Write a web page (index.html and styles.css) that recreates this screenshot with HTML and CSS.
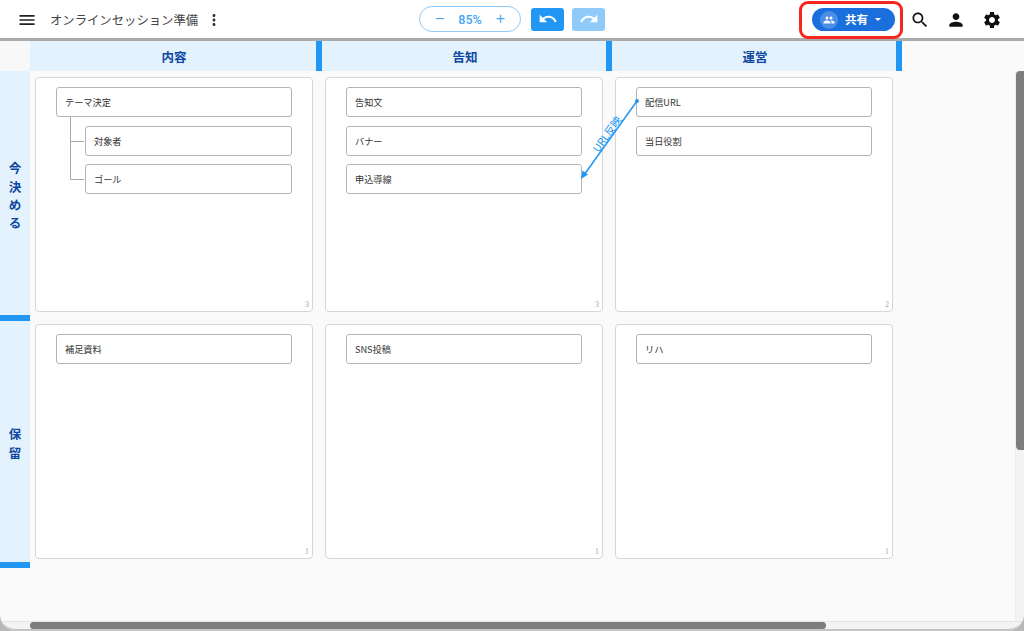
FILE: index.html
```html
<!DOCTYPE html>
<html lang="ja">
<head>
<meta charset="utf-8">
<title>オンラインセッション準備</title>
<link rel="stylesheet" href="styles.css">
</head>
<body>
<header class="toolbar">
  <div class="tb-left">
    <svg class="ic-menu" width="20" height="20" viewBox="0 0 24 24"><path d="M3 18h18v-2H3v2zm0-5h18v-2H3v2zm0-7v2h18V6H3z"/></svg>
    <span class="title">オンラインセッション準備</span>
    <svg class="ic-dots" width="18" height="18" viewBox="0 0 24 24"><path d="M12 8c1.1 0 2-.9 2-2s-.9-2-2-2-2 .9-2 2 .9 2 2 2zm0 2c-1.1 0-2 .9-2 2s.9 2 2 2 2-.9 2-2-.9-2-2-2zm0 6c-1.1 0-2 .9-2 2s.9 2 2 2 2-.9 2-2-.9-2-2-2z"/></svg>
  </div>
  <div class="tb-center">
    <div class="zoom"><span class="zoom-btn">−</span><span class="zoom-val">85%</span><span class="zoom-btn">+</span></div>
    <button class="hist"><svg width="24" height="24" viewBox="0 0 24 24"><path d="M12.5 8c-2.65 0-5.05.99-6.9 2.6L2 7v9h9l-3.62-3.62c1.39-1.16 3.16-1.88 5.12-1.88 3.54 0 6.55 2.31 7.6 5.5l2.37-.78C21.08 11.03 17.15 8 12.5 8z"/></svg></button>
    <button class="hist off"><svg width="24" height="24" viewBox="0 0 24 24"><path d="M18.4 10.6C16.55 8.99 14.15 8 11.5 8c-4.65 0-8.58 3.03-9.96 7.22L3.9 16c1.05-3.19 4.05-5.5 7.6-5.5 1.95 0 3.73.72 5.12 1.88L13 16h9V7l-3.6 3.6z"/></svg></button>
  </div>
  <div class="tb-right">
    <div class="share-ring">
      <div class="share">
        <span class="avatar"><svg width="12" height="12" viewBox="0 0 24 24"><path d="M16 11c1.66 0 2.99-1.34 2.99-3S17.66 5 16 5s-3 1.34-3 3 1.34 3 3 3zm-8 0c1.66 0 2.99-1.34 2.99-3S9.66 5 8 5 5 6.34 5 8s1.34 3 3 3zm0 2c-2.33 0-7 1.17-7 3.5V19h14v-2.5c0-2.33-4.67-3.5-7-3.5zm8 0c-.29 0-.62.02-.97.05 1.16.84 1.97 1.97 1.97 3.45V19h6v-2.5c0-2.33-4.67-3.5-7-3.5z"/></svg></span>
        <span class="share-label">共有</span>
        <span class="caret"></span>
      </div>
    </div>
    <svg class="ic" width="20" height="20" viewBox="0 0 24 24"><path d="M15.5 14h-.79l-.28-.27C15.41 12.59 16 11.11 16 9.5 16 5.91 13.09 3 9.5 3S3 5.91 3 9.5 5.91 16 9.5 16c1.61 0 3.09-.59 4.23-1.57l.27.28v.79l5 4.99L20.49 19l-4.99-5zm-6 0C7.01 14 5 11.99 5 9.5S7.01 5 9.5 5 14 7.01 14 9.5 11.99 14 9.5 14z"/></svg>
    <svg class="ic" width="20" height="20" viewBox="0 0 24 24"><path d="M12 12c2.21 0 4-1.790 4-4s-1.790-4-4-4-4 1.790-4 4 1.790 4 4 4zm0 2c-2.670 0-8 1.340-8 4v2h16v-2c0-2.660-5.330-4-8-4z"/></svg>
    <svg class="ic" width="20" height="20" viewBox="0 0 24 24"><path d="M19.14 12.94c.04-.3.06-.61.06-.94 0-.32-.02-.64-.07-.94l2.03-1.58c.18-.14.23-.41.12-.61l-1.92-3.32c-.12-.22-.37-.29-.59-.22l-2.39.96c-.5-.38-1.03-.7-1.62-.94l-.36-2.54c-.04-.24-.24-.41-.48-.41h-3.84c-.24 0-.43.17-.47.41l-.36 2.54c-.59.24-1.13.57-1.62.94l-2.39-.96c-.22-.08-.47 0-.59.22L2.74 8.87c-.12.21-.08.47.12.61l2.03 1.58c-.05.3-.09.63-.09.94s.02.64.07.94l-2.03 1.58c-.18.14-.23.41-.12.61l1.92 3.32c.12.22.37.29.59.22l2.39-.96c.5.38 1.03.7 1.62.94l.36 2.54c.05.24.24.41.48.41h3.84c.24 0 .44-.17.47-.41l.36-2.54c.59-.24 1.13-.56 1.62-.94l2.39.96c.22.08.47 0 .59-.22l1.92-3.32c.12-.22.07-.47-.12-.61l-2.01-1.58zM12 15.6c-1.98 0-3.6-1.62-3.6-3.6s1.62-3.6 3.6-3.6 3.6 1.62 3.6 3.6-1.62 3.6-3.6 3.6z"/></svg>
  </div>
</header>

<main class="board">
  <div class="col-heads">
    <div class="corner"></div>
    <div class="col-head first">内容</div>
    <div class="col-head">告知</div>
    <div class="col-head">運営</div>
  </div>

  <div class="row row-top">
    <div class="row-head"><span>今</span><span>決</span><span>め</span><span>る</span></div>
    <section class="card">
      <div class="node">テーマ決定</div>
      <div class="child">
        <div class="node">対象者</div>
        <div class="node">ゴール</div>
      </div>
      <svg class="tree" width="14" height="64" viewBox="0 0 14 64"><path d="M.5 0V62.500H14M.5 24.500H14" fill="none" stroke="#a8a8a8"/></svg>
      <span class="count">3</span>
    </section>
    <section class="card">
      <div class="node">告知文</div>
      <div class="node">バナー</div>
      <div class="node">申込導線</div>
      <span class="count">3</span>
    </section>
    <section class="card">
      <div class="node">配信URL</div>
      <div class="node">当日役割</div>
      <span class="count">2</span>
    </section>
  </div>

  <div class="row row-bottom">
    <div class="row-head"><span>保</span><span>留</span></div>
    <section class="card">
      <div class="node">補足資料</div>
      <span class="count">1</span>
    </section>
    <section class="card">
      <div class="node">SNS投稿</div>
      <span class="count">1</span>
    </section>
    <section class="card">
      <div class="node">リハ</div>
      <span class="count">1</span>
    </section>
  </div>

  <svg class="link" width="70" height="90" viewBox="0 0 70 90">
    <circle cx="59" cy="6" r="2" fill="#2196f3"/>
    <path d="M59 6L6 80" stroke="#2196f3" stroke-width="1.500" fill="none"/>
    <path d="M3 84L4.500 75.500L10 79.500Z" fill="#2196f3"/>
  </svg>
  <span class="link-label">URL反映</span>

  <div class="scroll-v-track"><div class="scroll-v"></div></div>
  <div class="scroll-h-track"><div class="scroll-h"></div></div>
  <div class="frame"></div>
</main>
</body>
</html>
```

FILE: styles.css
```css
* { box-sizing: border-box; }
html, body { margin: 0; height: 631px; overflow: hidden; }
body {
  font-family: "Noto Sans CJK JP", "Noto Sans", sans-serif;
  background: #fafafa;
  color: #333;
  position: relative;
}

/* toolbar */
.toolbar {
  height: 41px;
  background: #fff;
  border-bottom: 3px solid #aaa;
  position: relative;
  display: flex;
  align-items: center;
  justify-content: space-between;
}
.tb-left { display: flex; align-items: center; padding: 1px 0 0 16.500px; }
.ic-menu { fill: #222; margin-right: 13.500px; flex: none; }
.title { font-size: 12.350px; color: #444; width: 155px; white-space: nowrap; }
.ic-dots { fill: #333; }

.tb-center {
  position: absolute;
  left: 419px;
  top: 6px;
  display: flex;
  align-items: center;
  height: 26px;
}
.zoom {
  width: 102px;
  height: 26px;
  border: 1px solid #90caf9;
  border-radius: 13px;
  display: flex;
  align-items: center;
  justify-content: space-between;
  padding: 0 15px;
  color: #42a5f5;
  margin-right: 10px;
}
.zoom-btn { font-family: "Liberation Sans", sans-serif; font-size: 16px; line-height: 24px; color: #4aa8f5; }
.zoom-val { font-family: Roboto, sans-serif; font-size: 12.500px; font-weight: 500; }
.hist {
  width: 33px;
  height: 23px;
  padding: 0;
  border: 0;
  border-radius: 3px;
  background: #2196f3;
  margin-right: 8px;
  display: flex;
  align-items: center;
  justify-content: center;
}
.hist svg { fill: #fff; width: 20px; height: 20px; }
.hist.off { background: #90caf9; }

.tb-right { display: flex; align-items: center; position: absolute; left: 799px; top: 0; height: 39px; }
.share-ring {
  width: 104px;
  height: 38px;
  border: 3px solid #f4261e;
  border-radius: 9px;
  display: flex;
  align-items: center;
  padding-left: 10px;
  margin-right: 7px;
}
.share {
  width: 83px;
  height: 23px;
  background: #1a6fdc;
  border-radius: 12px;
  display: flex;
  align-items: center;
  color: #fff;
  padding-left: 8px;
}
.avatar {
  width: 18px;
  height: 18px;
  border-radius: 50%;
  background: #4a8ee6;
  display: flex;
  align-items: center;
  justify-content: center;
}
.avatar svg { fill: #fff; }
.share-label { font-size: 11.500px; font-weight: 700; margin-left: 7px; line-height: 1; }
.caret {
  width: 0;
  height: 0;
  border-left: 3px solid transparent;
  border-right: 3px solid transparent;
  border-top: 3px solid #fff;
  margin-left: 7px;
}
.ic { fill: #111; margin-right: 16px; flex: none; }

/* board */
.board { position: relative; height: 590px; }
.col-heads { display: flex; height: 30px; }
.corner { width: 30px; background: #f8f8f8; }
.col-head {
  width: 290px;
  background: #e3f2fd;
  border-right: 6px solid #2196f3;
  color: #0d47a1;
  font-size: 12.500px;
  font-weight: 700;
  display: flex;
  align-items: center;
  justify-content: center;
  line-height: 1;
  padding: 2px 0 0 2px;
}
.col-head.first { width: 292px; }

.row { display: flex; }
.row-top { height: 250px; }
.row-bottom { height: 247px; }
.row-head {
  width: 30px;
  flex: none;
  background: #e3f2fd;
  border-bottom: 6px solid #2196f3;
  color: #0d47a1;
  font-size: 12.500px;
  font-weight: 700;
  line-height: 18.300px;
  display: flex;
  flex-direction: column;
  align-items: center;
  justify-content: center;
  margin-right: 5px;
}
.row-top .row-head { padding-top: 6px; }
.row-bottom .row-head { padding-top: 4px; }
.card {
  width: 278px;
  height: 235px;
  background: #fff;
  border: 1px solid #d6d6d6;
  border-radius: 4px;
  margin-right: 12px;
  padding: 9px 20px 0 20px;
  position: relative;
  flex: none;
}
.row-top .card { margin-top: 6px; }
.row-bottom .card { margin-top: 3px; }
.node {
  height: 30px;
  background: #fff;
  border: 1px solid #b4b4b4;
  border-radius: 3px;
  font-size: 9.200px;
  color: #333;
  display: flex;
  align-items: center;
  padding-left: 8px;
  margin-bottom: 8.700px;
  white-space: nowrap;
}
.child { margin-left: 29px; }
.tree { position: absolute; left: 34px; top: 39px; }
.count {
  position: absolute;
  right: 3px;
  bottom: 2px;
  font-family: "Liberation Serif", serif;
  font-size: 8px;
  line-height: 1;
  color: #aaa;
}

/* connector between cards */
.link { position: absolute; left: 578px; top: 54px; }
.link-label {
  position: absolute;
  left: 582px;
  top: 87px;
  width: 50px;
  text-align: center;
  font-size: 10.500px;
  line-height: 12px;
  color: #2196f3;
  transform: rotate(-55deg);
  white-space: nowrap;
}

/* scrollbars and window edge */
.scroll-v-track {
  position: absolute;
  right: 0;
  top: 30px;
  bottom: 0;
  width: 9px;
  background: #f3f3f3;
  border-left: 1px solid #ececec;
}
.scroll-v {
  width: 8px;
  height: 379px;
  border-radius: 4px 0 0 4px;
  background: #7d7d7d;
}
.scroll-h-track {
  position: absolute;
  left: 0;
  right: 0;
  bottom: 0;
  height: 10px;
  background: #f3f3f3;
  border-top: 1px solid #e4e4e4;
  padding: 0 0 0 30px;
}
.scroll-h { width: 796px; height: 7px; border-radius: 4px; background: #7d7d7d; }
.frame {
  position: absolute;
  left: 0;
  right: 0;
  top: -70px;
  bottom: 0;
  border-bottom: 2px solid #c4c4c4;
  border-radius: 0 0 16px 16px;
  box-shadow: 0 0 0 20px #b8b8b8;
  pointer-events: none;
}
```
